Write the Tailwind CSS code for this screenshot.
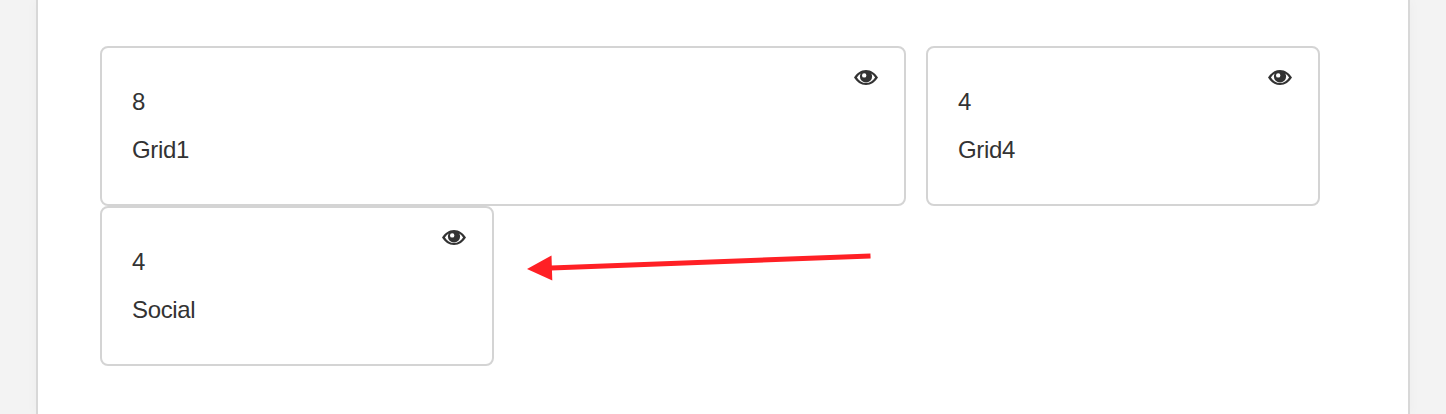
<!DOCTYPE html>
<html lang="en">
<head>
<meta charset="utf-8">
<title>Grid layout</title>
<script src="https://cdn.jsdelivr.net/npm/@tailwindcss/browser@4"></script>
</head>
<body class="h-screen overflow-hidden bg-[#f3f3f3] px-9 text-[#333] font-['Liberation_Sans',Arial,sans-serif]">
<svg class="hidden">
  <symbol id="eye" viewBox="0 0 24 18">
    <path fill="currentColor" fill-rule="evenodd" d="M12 1C17.2 1 21.2 4.300 24 8.500C21.200 13 17.200 16 12 16S2.800 13 0 8.500C2.800 4.300 6.800 1 12 1ZM6.700 4.500C5.200 5.500 4 6.900 2.900 8.500C5 11.900 8.200 14.100 12 14.100S19 11.900 21.100 8.500C20 6.900 18.800 5.500 17.300 4.500C17.800 5.400 18.100 6.400 18.100 7.500A6.100 6.100 0 0 1 5.900 7.500C5.900 6.400 6.200 5.400 6.700 4.500ZM10.200 4.200A2.200 2.200 0 1 0 10.200 8.600A2.200 2.200 0 0 0 10.200 4.200Z"/>
  </symbol>
</svg>
<main class="relative h-full border-x-2 border-[#d8d8d8] bg-white pl-[62px] pt-[46px] shadow-[0_0_12px_rgba(0,0,0,0.03)]">
  <div class="flex w-[1220px] flex-wrap gap-x-5 text-[24px] leading-[28px] tracking-[-0.35px]">
    <section class="flex h-40 w-[806px] justify-between rounded-lg border-2 border-[#d4d4d4] pl-[30px] pr-[26px]">
      <div class="flex flex-col gap-5 pt-[40px]"><p>8</p><p>Grid1</p></div>
      <svg class="mt-[21px] h-[18px] w-6"><use href="#eye"/></svg>
    </section>
    <section class="flex h-40 w-[394px] justify-between rounded-lg border-2 border-[#d4d4d4] pl-[30px] pr-[26px]">
      <div class="flex flex-col gap-5 pt-[40px]"><p>4</p><p>Grid4</p></div>
      <svg class="mt-[21px] h-[18px] w-6"><use href="#eye"/></svg>
    </section>
    <section class="flex h-40 w-[394px] justify-between rounded-lg border-2 border-[#d4d4d4] pl-[30px] pr-[26px]">
      <div class="flex flex-col gap-5 pt-[40px]"><p>4</p><p>Social</p></div>
      <svg class="mt-[21px] h-[18px] w-6"><use href="#eye"/></svg>
    </section>
  </div>
  <svg class="absolute left-[489px] top-[250px] h-[34px] w-[346px]" viewBox="527 250 346 34">
    <path d="M551 268L870.500 256" stroke="#ff2025" stroke-width="5" fill="none"/>
    <path d="M527 269L551.500 255.500L552.300 280.500Z" fill="#ff2025"/>
  </svg>
</main>
</body>
</html>
